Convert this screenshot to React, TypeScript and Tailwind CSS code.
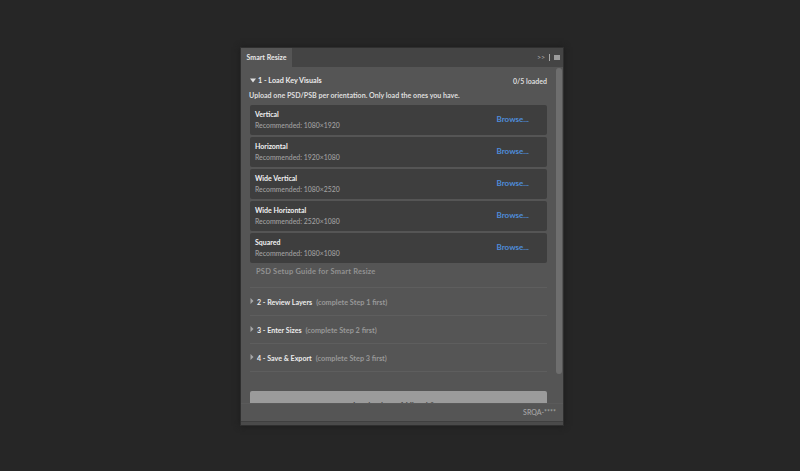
import React from "react";

const visuals = [
  { name: "Vertical", size: "1080×1920" },
  { name: "Horizontal", size: "1920×1080" },
  { name: "Wide Vertical", size: "1080×2520" },
  { name: "Wide Horizontal", size: "2520×1080" },
  { name: "Squared", size: "1080×1080" },
];

const steps = [
  { title: "2 - Review Layers", hint: "(complete Step 1 first)" },
  { title: "3 - Enter Sizes", hint: "(complete Step 2 first)" },
  { title: "4 - Save & Export", hint: "(complete Step 3 first)" },
];

export default function App() {
  return (
    <div className="h-[471px] w-[800px] overflow-hidden bg-[#262626] pt-[47px] pl-[240px] font-['Lato',sans-serif]">
      {/* Panel */}
      <div className="flex h-[379px] w-[324px] flex-col border border-[#2f2f2f] bg-[#555555] shadow-[0_0_6px_#1c1c1c]">
        {/* Tab bar */}
        <div className="flex h-[19px] shrink-0 items-stretch justify-between bg-[#444444]">
          <div className="flex w-[51px] items-center justify-center bg-[#555555] text-[7px] font-bold text-[#e8e8e8]">
            Smart Resize
          </div>
          <div className="flex items-center gap-[4px] pr-[3px]">
            <span className="text-[7px] leading-none text-[#a8a8a8]">&gt;&gt;</span>
            <span className="h-[7px] w-px bg-[#a8a8a8]" />
            <span className="h-[5px] w-[6px] bg-[#9c9c9c]" />
          </div>
        </div>

        {/* Scroll area */}
        <div className="relative h-[336px] shrink-0 overflow-hidden pt-[8px] pr-[16px] pl-[9px]">
          <div className="flex h-[12px] items-center justify-between text-[7.2px] font-bold text-[#ececec]">
            <div className="flex items-center gap-[2px]">
              <svg width="6" height="5" viewBox="0 0 6 5">
                <path d="M0 0.5h6L3 4.5z" fill="#e0e0e0" />
              </svg>
              <span>1 - Load Key Visuals</span>
            </div>
            <span className="text-[7px] font-bold text-[#dcdcdc]">0/5 loaded</span>
          </div>
          <p className="mt-[3px] -ml-px text-[7.1px] leading-[12px] font-bold text-[#dedede]">
            Upload one PSD/PSB per orientation. Only load the ones you have.
          </p>

          <div className="mt-[3px] flex flex-col gap-[2px]">
            {visuals.map((v) => (
              <div
                key={v.name}
                className="flex h-[30px] items-center justify-between rounded-[2px] bg-[#3e3e3e] pr-[18px] pl-[5px]"
              >
                <div className="flex flex-col">
                  <span className="text-[7px] leading-[11px] font-bold text-[#f2f2f2]">{v.name}</span>
                  <span className="text-[6.9px] leading-[11px] font-medium text-[#a0a0a0]">Recommended: {v.size}</span>
                </div>
                <span className="mb-[2px] text-[8px] font-bold text-[#4f8ddb]">Browse...</span>
              </div>
            ))}
          </div>

          <div className="mt-[3px] pl-[6px] text-[7.5px] leading-[12px] font-bold tracking-[0.2px] text-[#929292]">
            PSD Setup Guide for Smart Resize
          </div>

          <div className="mt-[9px] border-t border-[#5e5e5e]">
            {steps.map((s) => (
              <div key={s.title} className="flex h-[28px] items-center gap-[3px] border-b border-[#5e5e5e] pt-[3px]">
                <svg width="4" height="6" viewBox="0 0 4 6" className="mb-[5px]">
                  <path d="M0.5 0L3.5 3L0.5 6z" fill="#a8a8a8" />
                </svg>
                <span className="text-[7.1px] font-bold text-[#ececec]">{s.title}</span>
                <span className="pl-[1px] text-[7.3px] font-bold text-[#989898]">{s.hint}</span>
              </div>
            ))}
          </div>

          <div className="mt-[19px] flex h-[24px] items-start justify-center rounded-[2px] bg-[#9b9b9b] pt-[8px] text-[8px] font-bold text-[#4c4c4c]">
            Load at least 1 Visual first
          </div>

          {/* Scrollbar */}
          <div className="absolute top-[1px] right-[1px] h-[306px] w-[6px] rounded-full bg-[#6e6e6e]" />
        </div>

        {/* Footer */}
        <div className="flex h-[18px] shrink-0 items-center justify-end border-t border-[#5a5a5a] pr-[7px] text-[7px] font-medium text-[#a8a8a8]">
          SRQA-****
        </div>
        <div className="flex-1 border-t border-[#3f3f3f] bg-[#4a4a4a]" />
      </div>
    </div>
  );
}
